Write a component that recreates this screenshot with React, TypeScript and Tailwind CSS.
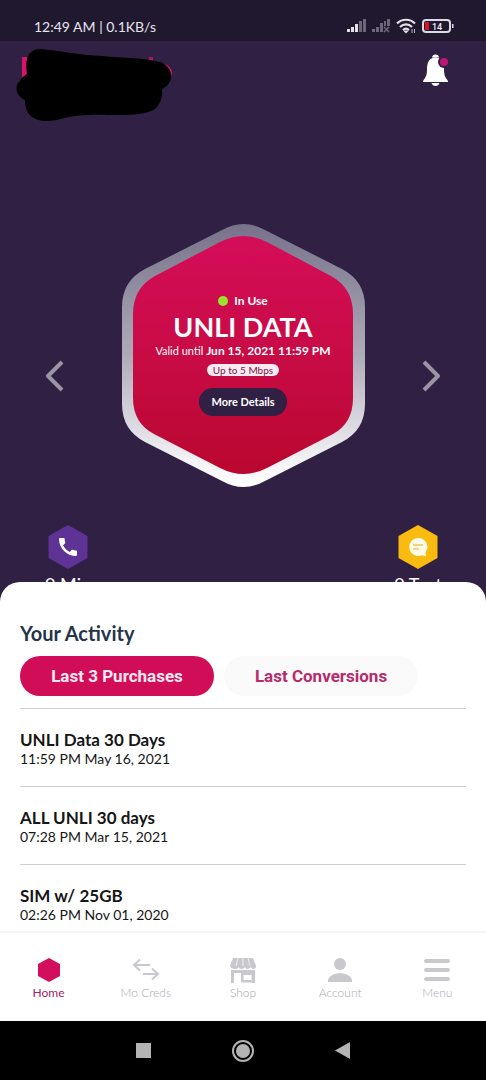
import React from 'react';
import { MdCall } from 'react-icons/md';

const purchases = [
  { name: 'UNLI Data 30 Days', date: '11:59 PM May 16, 2021' },
  { name: 'ALL UNLI 30 days', date: '07:28 PM Mar 15, 2021' },
  { name: 'SIM w/ 25GB', date: '02:26 PM Nov 01, 2020' },
];

const StatusIcons: React.FC = () => (
  <svg width="110" height="18" viewBox="0 0 110 18" aria-hidden="true">
    <g fill="#e4e0ea">
      <rect x="1" y="12" width="3" height="3" />
      <rect x="5" y="10" width="3" height="5" />
      <rect x="9" y="7" width="3" height="8" />
    </g>
    <g fill="#6d667b">
      <rect x="13" y="4" width="3" height="11" />
      <rect x="17" y="2" width="3" height="13" />
      <rect x="26" y="12" width="3" height="3" />
      <rect x="30" y="10" width="3" height="5" />
      <rect x="34" y="6" width="3" height="9" />
      <path d="M38 4h2v5h-2zM41 2h3v7h-3z" />
      <path d="M38 10l5 5M43 10l-5 5" stroke="#6d667b" strokeWidth="1.6" />
    </g>
    <g fill="none" stroke="#e4e0ea" strokeWidth="2.2">
      <path d="M51 6.500c5-5 13-5 18 0M54 10c3.500-3.500 8.500-3.500 12 0" />
      <path d="M57 13c2-2 4-2 6 0" />
    </g>
    <path d="M57 13.500h6l-3 3z" fill="#e4e0ea" />
    <path d="M66 12v4M68.500 12v4" stroke="#bdb6c8" strokeWidth="1" />
    <rect x="77" y="3" width="27" height="12" rx="3" fill="none" stroke="#dedae4" strokeWidth="2" />
    <rect x="79" y="5" width="4" height="8" fill="#d3142b" />
    <path d="M106 7h1.500v4H106z" fill="#dedae4" />
    <text x="91" y="12.500" textAnchor="middle" fontSize="9" fontWeight="500" fill="#f0edf4" fontFamily="Roboto, sans-serif">14</text>
  </svg>
);

const CoveredLogo: React.FC = () => (
  <svg width="158" height="74" viewBox="0 0 158 74" aria-hidden="true">
    <rect x="6" y="8" width="5" height="22" fill="#d9126a" />
    <rect x="133" y="8" width="4" height="8" fill="#b5125c" />
    <circle cx="147" cy="24" r="7" fill="none" stroke="#d9126a" strokeWidth="4" />
    <path
      d="M11 10C13 3 18 0 25 0c20 2 38 6 61 7 22 2 43 2 58 6 8 3 12 9 11 16-1 6-5 9-9 11 1 9-2 15-7 20-10 6-25 6-43 6-22-1-35 0-48 3-10 3-22 5-30 0-7-3-9-11-9-18C-1 46-1 37 3 33c2-4 5-6 8-8-1-5-1-11 0-15z"
      fill="#000"
    />
  </svg>
);

const BellIcon: React.FC = () => (
  <svg width="28" height="34" viewBox="0 0 28 34" aria-hidden="true">
    <path d="M10 3.500c0-4 7-4 7 0z" fill="#fff" />
    <path d="M13.500 3.500C20 3.500 22 9 22 15c0 6 1 8 4 12v1H1v-1c3-4 4-6 4-12 0-6 2-11.500 8.500-11.500z" fill="#fff" />
    <path d="M9.500 29h8c-1 4-7 4-8 0z" fill="#fff" />
    <circle cx="22" cy="8" r="6" fill="#2f2044" />
    <circle cx="22" cy="8" r="4" fill="#bd1672" />
  </svg>
);

const HexPlate: React.FC = () => (
  <svg viewBox="0 0 243 265" className="col-start-1 row-start-1 w-full" aria-hidden="true">
    <defs>
      <linearGradient id="rim" x1="0" y1="0" x2="0" y2="1">
        <stop offset="0" stopColor="#77728a" />
        <stop offset="0.5" stopColor="#aeabb9" />
        <stop offset="0.9" stopColor="#f3f2f5" />
        <stop offset="1" stopColor="#fff" />
      </linearGradient>
      <linearGradient id="plate" x1="0" y1="0" x2="0" y2="1">
        <stop offset="0" stopColor="#d40d58" />
        <stop offset="0.5" stopColor="#c80b45" />
        <stop offset="1" stopColor="#b9072f" />
      </linearGradient>
    </defs>
    <path
      d="M100 7Q121.500 -5 143 7L220 46Q243 58 243 84V181Q243 207 220 219L143 258Q121.500 270 100 258L23 219Q0 207 0 181V84Q0 58 23 46Z"
      fill="url(#rim)"
    />
    <path
      d="M98 19Q121.500 7 145 19L209 53Q231 65 231 91V175Q231 200 211 211L145 245Q121.500 257 98 245L32 211Q11 200 11 175V91Q11 65 33 53Z"
      fill="url(#plate)"
    />
  </svg>
);

const Hexagon: React.FC<{ fill: string; children: React.ReactNode }> = ({ fill, children }) => (
  <svg width="40" height="44" viewBox="0 0 40 44" aria-hidden="true">
    <path d="M20 0l19.500 11v22L20 44 .5 33V11z" fill={fill} />
    {children}
  </svg>
);

const HomeIcon: React.FC = () => (
  <svg width="28" height="26" viewBox="0 0 28 26" aria-hidden="true">
    <path d="M14 1l11 6v12l-11 6-11-6V7z" fill="#d30e5c" />
  </svg>
);

const SwapIcon: React.FC = () => (
  <svg width="28" height="26" viewBox="0 0 28 26" fill="none" stroke="#c9c8cd" strokeWidth="2" aria-hidden="true">
    <path d="M18 8H2M8 2.500L2 8l6 5.500M11 17h15M20 11.500l6 5.500-6 5.500" />
  </svg>
);

const ShopIcon: React.FC = () => (
  <svg width="28" height="26" viewBox="0 0 28 26" aria-hidden="true">
    <path d="M4 1h20l3 8c0 2-1 3-2.500 3S22 11 21.500 10c-.5 1-1.500 2-3 2s-2.500-1-3-2c-.5 1-1.500 2-3 2s-2.500-1-3-2C9 11 8 12 6.500 12 3 12 1 11 1 9z" fill="#c9c8cd" />
    <path d="M9 1L7 9M14 1v8M19 1l2 8" stroke="#ececef" strokeWidth="1" />
    <path d="M2 13h24v13h-3V16H5v10H2z" fill="#c9c8cd" />
    <path d="M12 16h13v9.500H12z" fill="#c9c8cd" />
    <path d="M14.500 18h8v5h-8z" fill="#fff" />
  </svg>
);

const AccountIcon: React.FC = () => (
  <svg width="28" height="26" viewBox="0 0 28 26" fill="#c9c8cd" aria-hidden="true">
    <circle cx="14" cy="7" r="6" />
    <path d="M2 25v-2c2-9 22-9 24 0v2z" />
  </svg>
);

const MenuIcon: React.FC = () => (
  <svg width="28" height="26" viewBox="0 0 28 26" stroke="#c9c8cd" strokeWidth="4" strokeLinecap="round" aria-hidden="true">
    <path d="M3 4h22M3 13h22M3 22h22" />
  </svg>
);

const tabs = [
  { label: 'Home', icon: <HomeIcon />, active: true },
  { label: 'Mo Creds', icon: <SwapIcon />, active: false },
  { label: 'Shop', icon: <ShopIcon />, active: false },
  { label: 'Account', icon: <AccountIcon />, active: false },
  { label: 'Menu', icon: <MenuIcon />, active: false },
];

const App: React.FC = () => {
  return (
    <div className="min-h-screen flex flex-col bg-[#2f2044] font-['Lato',sans-serif]">
      <div className="h-[41px] shrink-0 bg-[#20182f] flex items-end justify-between pl-[34px] pr-[30px] pb-1">
        <span className="text-[14px] leading-5 text-[#e8e4ee]">12:49 AM | 0.1KB/s</span>
        <div className="pb-[2px]"><StatusIcons /></div>
      </div>

      <header className="flex items-start justify-between pl-4 pr-9 pt-2">
        <CoveredLogo />
        <button type="button" aria-label="Notifications" className="pt-[5px]">
          <BellIcon />
        </button>
      </header>

      <main className="grow flex flex-col">
        <section className="flex items-center justify-between px-11 pt-[100px]">
          <button type="button" aria-label="Previous" className="mt-10">
            <svg width="20" height="32" viewBox="0 0 20 32" fill="none" stroke="#9a94a4" strokeWidth="4" strokeLinejoin="round" aria-hidden="true">
              <path d="M18 2L4 16l14 14" />
            </svg>
          </button>
          <div className="grid w-[243px]">
            <HexPlate />
            <div className="col-start-1 row-start-1 flex flex-col items-center pt-[68px] text-white">
              <p className="flex items-center gap-[6px] text-[12px] leading-5 font-bold">
                <span className="size-[10px] rounded-full bg-[#9be22d]" />
                In Use
              </p>
              <h1 className="text-[27px] leading-8 font-bold">UNLI DATA</h1>
              <p className="text-[11px] leading-4">
                Valid until <strong className="text-[12px] font-bold">Jun 15, 2021 11:59 PM</strong>
              </p>
              <span className="mt-[5px] rounded-full bg-[#fbeaf1] px-[6px] text-[10px] leading-3 text-[#7c1747]">Up to 5 Mbps</span>
              <button type="button" className="mt-3 rounded-full bg-[#2f2044] px-3 py-[6px] text-[11px] leading-4 font-bold">
                More Details
              </button>
            </div>
          </div>
          <button type="button" aria-label="Next" className="mt-10">
            <svg width="20" height="32" viewBox="0 0 20 32" fill="none" stroke="#9a94a4" strokeWidth="4" strokeLinejoin="round" aria-hidden="true">
              <path d="M2 2l14 14L2 30" />
            </svg>
          </button>
        </section>

        <section className="flex justify-between px-10 pt-[37px] text-[18px] leading-6 text-white">
          <div className="w-14 flex flex-col items-center gap-[3px] whitespace-nowrap">
            <Hexagon fill="#5f3296">
              <MdCall x="8" y="10" size={24} color="#fff" />
            </Hexagon>
            <span>0 Min</span>
          </div>
          <div className="w-14 flex flex-col items-center gap-[3px] whitespace-nowrap">
            <Hexagon fill="#f9bb0f">
              <path d="M20 13a9 9 0 1 0 4 17.200l4 1-.5-3.800A9 9 0 0 0 20 13z" fill="#fffbe8" />
              <path d="M15 20h10M15 24h6" stroke="#e9ae1a" strokeWidth="1.200" />
            </Hexagon>
            <span>0 Text</span>
          </div>
        </section>

        <section className="relative -mt-[14px] grow rounded-t-[20px] bg-white px-5 pt-[37px]">
          <h2 className="text-[20px] leading-7 font-bold text-[#26344b]">Your Activity</h2>
          <div className="mt-[9px] flex gap-[10px] font-['Roboto',sans-serif] text-[17px] leading-6 font-bold">
            <button type="button" className="w-[194px] rounded-full bg-[#d20d58] py-2 text-[#ffe8f1]">Last 3 Purchases</button>
            <button type="button" className="w-[194px] rounded-full bg-[#fafafa] py-2 text-[#b82a6b]">Last Conversions</button>
          </div>
          <ul className="mt-3">
            {purchases.map((item) => (
              <li key={item.name} className="h-[78px] border-t border-[#cfcfd1] pt-5 text-[#161616]">
                <p className="text-[17px] leading-[22px] font-bold">{item.name}</p>
                <p className="text-[14px] leading-4">{item.date}</p>
              </li>
            ))}
          </ul>
        </section>
      </main>

      <nav className="relative -mt-[13px] h-[90px] shrink-0 grid grid-cols-5 border-t-2 border-[#f4f4f4] bg-white pt-6">
        {tabs.map((tab) => (
          <a
            key={tab.label}
            href="#"
            className={`flex flex-col items-center gap-[2px] text-[12px] leading-4 ${tab.active ? 'text-[#a0236a]' : 'font-light text-[#a9a9b0]'}`}
          >
            {tab.icon}
            {tab.label}
          </a>
        ))}
      </nav>

      <div className="h-[59px] shrink-0 bg-black flex items-center justify-center gap-[81px]">
        <button type="button" aria-label="Recent apps" className="size-[15px] bg-[#b4b4b4]" />
        <button type="button" aria-label="Home screen" className="size-[22px] rounded-full border-2 border-[#b4b4b4] p-[2px]">
          <span className="block size-full rounded-full bg-[#b4b4b4]" />
        </button>
        <button type="button" aria-label="Back">
          <svg width="15" height="17" viewBox="0 0 15 17" fill="#b4b4b4" aria-hidden="true">
            <path d="M15 0v17L0 8.500z" />
          </svg>
        </button>
      </div>
    </div>
  );
};

export default App;
